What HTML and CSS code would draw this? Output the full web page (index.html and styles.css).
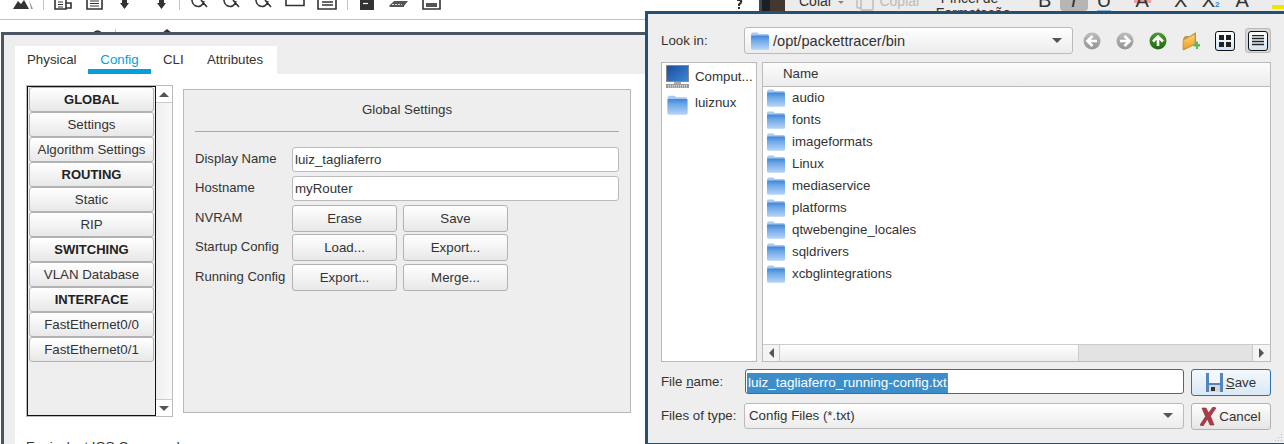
FILE: index.html
```html
<!DOCTYPE html>
<html lang="en">
<head>
  <meta charset="UTF-8">
  <title>Packet Tracer - Router Config</title>
  <link rel="stylesheet" href="styles.css">
</head>
<body>
  <svg class="defs" width="0" height="0">
    <defs>
      <linearGradient id="folder-body" x1="0" y1="0" x2="0" y2="1">
        <stop offset="0" stop-color="#3f86d6"/>
        <stop offset="0.35" stop-color="#6fa8e8"/>
        <stop offset="1" stop-color="#b5d3f7"/>
      </linearGradient>
      <linearGradient id="grey-ball" x1="0" y1="0" x2="0" y2="1">
        <stop offset="0" stop-color="#bdbdbd"/>
        <stop offset="1" stop-color="#949494"/>
      </linearGradient>
      <linearGradient id="green-ball" x1="0" y1="0" x2="0" y2="1">
        <stop offset="0" stop-color="#4b9a32"/>
        <stop offset="1" stop-color="#1f6a12"/>
      </linearGradient>
      <linearGradient id="new-folder" x1="0" y1="0" x2="0" y2="1">
        <stop offset="0" stop-color="#fbd676"/>
        <stop offset="1" stop-color="#ea9d1e"/>
      </linearGradient>
      <linearGradient id="screen" x1="0" y1="0" x2="1" y2="1">
        <stop offset="0" stop-color="#1a4f9c"/>
        <stop offset="1" stop-color="#3f86d6"/>
      </linearGradient>
      <symbol id="folder" viewBox="0 0 20 19">
        <path d="M1 3.5 Q1 1.5 3 1.5 H7 Q8 1.5 8.6 3 H17 Q19 3 19 5 V17 Q19 18.5 17.5 18.5 H2.5 Q1 18.5 1 17 Z" fill="#a9c9f2"/>
        <rect x="1" y="4.5" width="18" height="14" rx="1" fill="url(#folder-body)"/>
      </symbol>
    </defs>
  </svg>

  <div class="desktop">
    <!-- app toolbar behind the windows -->
    <svg class="app-toolbar" width="760" height="33" viewBox="0 0 760 33">
      <g fill="#333">
        <path d="M13 9 L18 1 L21 4 L24 0 L29 9 Z"/>
        <path d="M29 0 L33 9 H31 Z" fill="#999"/>
        <path d="M122 0 H127 V3 H129 L124.5 9 L120 3 H122 Z"/>
        <path d="M159 0 H164 V3 H166 L161.5 9 L157 3 H159 Z"/>
        <path d="M360 0 H374 V10 H360 Z"/>
        <path d="M389 6 L394 1 H408 L404 6 V7 H390 Z" fill="#555"/>
        <path d="M426 3 H437 V7 H426 Z" fill="#555"/>
        <path d="M737 0 H742 Q743 3 740 5 V6 H738 V4 Q740 3 740 1 H737 Z M738 7 H740 V9 H738 Z"/>
      </g>
      <path d="M363 3.5 H368" stroke="#fff" stroke-width="1.2"/>
      <path d="M392 4.5 H402" stroke="#ddd" stroke-dasharray="2 1"/>
      <g fill="none" stroke="#333" stroke-width="1.6">
        <path d="M55 0 V9 H66 V0 M66 3 H71 V8 H66"/>
        <path d="M58 2 H63 M58 4.5 H63 M58 7 H63" stroke-width="1"/>
        <path d="M87 0 V9 H102 V0"/>
        <path d="M90 1 H99 M90 3.5 H99 M90 6 H99" stroke-width="1"/>
        <path d="M194 -4 A6 6 0 1 0 204 1 M201 0 L207 7"/>
        <path d="M226 -4 A6 6 0 1 0 236 1 M233 0 L239 7"/>
        <path d="M258 -4 A6 6 0 1 0 268 1 M265 0 L271 7"/>
        <path d="M286 0 V5.5 H304 V0"/>
        <path d="M318 0 V9 H336 V0 M322 2 H333 M322 5 H333"/>
        <path d="M423 0 V9 H440 V0"/>
      </g>
      <path d="M43.5 0 V10 M179.5 0 V10 M347.5 0 V10" stroke="#c4c4c4"/>
      <path d="M0 19.5 H645" stroke="#c0c0c0"/>
      <path d="M93 33 A5 5 0 0 1 102 33 Z M162 33 L167 29 L172 33 Z" fill="#333"/>
      <path d="M115.5 29 V33" stroke="#c4c4c4"/>
    </svg>

    <!-- office ribbon peeking out above the dialog -->
    <div class="ribbon">
      <div class="rb-photo"></div>
      <span class="rb-text rb-colar">Colar</span>
      <svg class="rb-caret" width="6" height="4" viewBox="0 0 6 4"><path d="M0 0 H6 L3 3 Z" fill="#888"/></svg>
      <svg class="rb-copy" width="18" height="11" viewBox="0 0 18 11"><path d="M1 0 V7 Q1 8 2 8 H5 M5 0 V9 Q5 10 6 10 H16 Q17 10 17 9 V0" fill="none" stroke="#bbb" stroke-width="1.4"/></svg>
      <span class="rb-text rb-copiar">Copiar</span>
      <div class="rb-pincel">
        <span>Pincel de</span>
        <span class="rb-format">Formatação</span>
      </div>
      <span class="rb-glyph rb-b">B</span>
      <span class="rb-glyph rb-i">I</span>
      <span class="rb-glyph rb-u">U</span>
      <span class="rb-glyph rb-a">A</span>
      <span class="rb-glyph rb-x">X</span>
      <span class="rb-glyph rb-x2">X<small>2</small></span>
      <span class="rb-glyph rb-aa">A</span>
      <span class="rb-hl"></span>
    </div>

    <!-- router window -->
    <div class="window router">
      <div class="tabs">
        <span class="tab">Physical</span>
        <span class="tab active">Config</span>
        <span class="tab">CLI</span>
        <span class="tab">Attributes</span>
      </div>
      <div class="tab-body">
        <div class="config-row">
          <div class="side-list">
            <div class="side-items">
              <button class="side-btn head">GLOBAL</button>
              <button class="side-btn">Settings</button>
              <button class="side-btn">Algorithm Settings</button>
              <button class="side-btn head">ROUTING</button>
              <button class="side-btn">Static</button>
              <button class="side-btn">RIP</button>
              <button class="side-btn head">SWITCHING</button>
              <button class="side-btn">VLAN Database</button>
              <button class="side-btn head">INTERFACE</button>
              <button class="side-btn">FastEthernet0/0</button>
              <button class="side-btn">FastEthernet0/1</button>
            </div>
            <div class="vscroll">
              <div class="vscroll-btn top"><svg width="10" height="5" viewBox="0 0 10 5"><path d="M0 5 L5 0 L10 5 Z" fill="#555"/></svg></div>
              <div class="vscroll-btn bottom"><svg width="10" height="5" viewBox="0 0 10 5"><path d="M0 0 H10 L5 5 Z" fill="#555"/></svg></div>
            </div>
          </div>

          <div class="settings">
            <div class="settings-title">Global Settings</div>
            <div class="settings-form">
              <label>Display Name</label>
              <input class="field" type="text" value="luiz_tagliaferro">
              <label>Hostname</label>
              <input class="field" type="text" value="myRouter">
              <label class="btn-label">NVRAM</label>
              <div class="btn-pair"><button class="btn">Erase</button><button class="btn">Save</button></div>
              <label class="btn-label">Startup Config</label>
              <div class="btn-pair"><button class="btn">Load...</button><button class="btn">Export...</button></div>
              <label class="btn-label">Running Config</label>
              <div class="btn-pair"><button class="btn">Export...</button><button class="btn">Merge...</button></div>
            </div>
          </div>
        </div>
        <div class="ios-title">Equivalent IOS Commands</div>
      </div>
    </div>

    <!-- save file dialog -->
    <div class="window dialog">
      <div class="look-row">
        <span class="look-label">Look in:</span>
        <div class="combo look-combo">
          <svg class="folder-ico" width="20" height="19"><use href="#folder"/></svg>
          <span class="combo-text">/opt/packettracer/bin</span>
          <span class="combo-arrow"></span>
        </div>
        <div class="nav-icons">
          <svg width="18" height="18" viewBox="0 0 18 18"><circle cx="9" cy="9" r="8.5" fill="url(#grey-ball)"/><path d="M9.5 4 L4.5 9 L9.5 14 M5 9 H14" fill="none" stroke="#fff" stroke-width="2.6"/></svg>
          <svg width="18" height="18" viewBox="0 0 18 18"><circle cx="9" cy="9" r="8.5" fill="url(#grey-ball)"/><path d="M8.5 4 L13.5 9 L8.5 14 M13 9 H4" fill="none" stroke="#fff" stroke-width="2.6"/></svg>
          <svg width="18" height="18" viewBox="0 0 18 18"><circle cx="9" cy="9" r="8.5" fill="url(#green-ball)"/><path d="M4 9.5 L9 4.5 L14 9.5 M9 5 V14" fill="none" stroke="#fff" stroke-width="2.6"/></svg>
          <svg width="18" height="20" viewBox="0 0 18 20">
            <path d="M1 8 L3 5 H8 L14 1 V13 L2 19 Z" fill="#b99a5a"/>
            <path d="M1 19 V9 L13 3 V13 Z" fill="url(#new-folder)" stroke="#b9821e" stroke-width="0.6"/>
            <path d="M11.5 13 H14 V10.5 H16 V13 H18 V15.5 H16 V18 H14 V15.5 H11.5 Z" fill="#5cb85c"/>
          </svg>
        </div>
        <div class="view-btn first">
          <svg width="12" height="12" viewBox="0 0 12 12"><path d="M0 0 H5 V5 H0 Z M7 0 H12 V5 H7 Z M0 7 H5 V12 H0 Z M7 7 H12 V12 H7 Z" fill="#222"/></svg>
        </div>
        <div class="view-toggle">
          <div class="view-btn">
            <svg width="12" height="12" viewBox="0 0 12 12"><path d="M0 0.5 H12 M0 3.5 H12 M0 6.5 H12 M0 9.5 H12" stroke="#222" stroke-width="1.4"/></svg>
          </div>
        </div>
      </div>

      <div class="browser-row">
        <div class="places">
          <div class="place first">
            <svg width="25" height="24" viewBox="0 0 25 24">
              <rect x="1" y="0" width="23" height="17" fill="#8a8a8a"/>
              <rect x="2" y="1" width="21" height="15" fill="url(#screen)"/>
              <path d="M9 17 H16 V19 H9 Z" fill="#aaa"/>
              <path d="M1 19 H24 L24 23 H1 Z" fill="#9a9a9a"/>
              <path d="M3 20.5 H22 M3 22 H22" stroke="#ddd" stroke-dasharray="1 1"/>
            </svg>
            <span>Comput...</span>
          </div>
          <div class="place second">
            <svg width="25" height="21"><use href="#folder"/></svg>
            <span>luiznux</span>
          </div>
        </div>
        <div class="files">
          <div class="files-head">Name</div>
          <div class="file-rows">
            <div class="file"><svg width="20" height="19"><use href="#folder"/></svg>audio</div>
            <div class="file"><svg width="20" height="19"><use href="#folder"/></svg>fonts</div>
            <div class="file"><svg width="20" height="19"><use href="#folder"/></svg>imageformats</div>
            <div class="file"><svg width="20" height="19"><use href="#folder"/></svg>Linux</div>
            <div class="file"><svg width="20" height="19"><use href="#folder"/></svg>mediaservice</div>
            <div class="file"><svg width="20" height="19"><use href="#folder"/></svg>platforms</div>
            <div class="file"><svg width="20" height="19"><use href="#folder"/></svg>qtwebengine_locales</div>
            <div class="file"><svg width="20" height="19"><use href="#folder"/></svg>sqldrivers</div>
            <div class="file"><svg width="20" height="19"><use href="#folder"/></svg>xcbglintegrations</div>
          </div>
          <div class="hscroll">
            <div class="hscroll-btn"><svg width="5" height="10" viewBox="0 0 5 10"><path d="M5 0 V10 L0 5 Z" fill="#555"/></svg></div>
            <div class="hscroll-thumb"></div>
            <div class="hscroll-track"></div>
            <div class="hscroll-btn end"><svg width="5" height="10" viewBox="0 0 5 10"><path d="M0 0 V10 L5 5 Z" fill="#555"/></svg></div>
          </div>
        </div>
      </div>

      <div class="name-row">
        <span class="name-label">File <u>n</u>ame:</span>
        <div class="name-input"><span class="selected">luiz_tagliaferro_running-config.txt</span></div>
        <button class="dlg-btn default">
          <svg width="17" height="19" viewBox="0 0 17 19">
            <path d="M0 0 H17 V19 H0 Z" fill="#5585bd"/>
            <rect x="3" y="0" width="11" height="10" fill="#f2f6fb"/>
            <rect x="3" y="12" width="11" height="7" fill="#d6d6d6"/>
            <rect x="5" y="14" width="4" height="4" fill="#333"/>
          </svg>
          <span><u>S</u>ave</span>
        </button>
      </div>

      <div class="type-row">
        <span class="type-label">Files of type:</span>
        <div class="combo type-combo">
          <span class="combo-text">Config Files (*.txt)</span>
          <span class="combo-arrow"></span>
        </div>
        <button class="dlg-btn cancel">
          <svg width="16" height="19" viewBox="0 0 16 19">
            <path d="M2 1 L6 1 L8.5 6 L13 0 L16 1 L10.5 9 L14 18 L10 18 L7.5 12 L3 19 L0 18 L5.5 9.5 Z" fill="#b03a48" stroke="#7a2a33" stroke-width="0.6"/>
          </svg>
          <span>Cancel</span>
        </button>
      </div>

      <svg class="grip" width="8" height="8" viewBox="0 0 8 8"><path d="M6 0 H7 V1 H6 Z M3 3 H4 V4 H3 Z M6 3 H7 V4 H6 Z M0 6 H1 V7 H0 Z M3 6 H4 V7 H3 Z M6 6 H7 V7 H6 Z" fill="#bbb"/></svg>
    </div>
  </div>
</body>
</html>
```

FILE: styles.css
```css
* {
  box-sizing: border-box;
}

body {
  margin: 0;
  background: #fff;
  font-family: "Liberation Sans", Arial, sans-serif;
  font-size: 13.3px;
  color: #333;
}

button, input {
  font-family: inherit;
  font-size: 13.3px;
  color: #333;
}

.defs {
  position: absolute;
}

.desktop {
  position: relative;
  width: 1284px;
  height: 444px;
  overflow: hidden;
}

.app-toolbar {
  position: absolute;
  left: 0;
  top: 0;
}

/* ribbon of the other app */
.ribbon {
  position: absolute;
  left: 759px;
  top: 0;
  width: 525px;
  height: 11px;
  overflow: hidden;
  display: flex;
  align-items: flex-start;
  background: #ececec;
  font-size: 14px;
}

.ribbon > * {
  flex: none;
}

.rb-photo {
  width: 26px;
  height: 11px;
  background: linear-gradient(90deg, #3c4852 0 3px, #1c2026 3px 11px, #43372f 11px);
}

.rb-text {
  height: 11px;
  line-height: 2px;
}

.rb-colar {
  margin-left: 14px;
}

.rb-caret {
  margin: 1px 0 0 6px;
}

.rb-copy {
  margin-left: 12px;
}

.rb-copiar {
  margin-left: 5px;
  color: #bbb;
}

.rb-pincel {
  width: 97px;
  margin: -9px 0 0 20px;
  display: flex;
  flex-direction: column;
  align-items: flex-start;
  line-height: 15px;
}

.rb-format {
  margin-left: -5px;
}

.rb-glyph {
  height: 11px;
  font-size: 20px;
  line-height: 0;
  text-align: center;
}

.rb-b {
  width: 14px;
}

.rb-i {
  width: 28px;
  margin-left: 8px;
  font-style: italic;
  background: #b5b5b5;
  border-radius: 0 0 4px 4px;
}

.rb-u {
  width: 14px;
  margin-left: 9px;
  height: 11px;
  border-bottom: 1px solid #8fb4e0;
}

.rb-a {
  width: 17px;
  margin-left: 23px;
  background: linear-gradient(#eea0a0, #eea0a0) top left / 100% 3px no-repeat;
}

.rb-x {
  width: 14px;
  margin-left: 23px;
}

.rb-x2 {
  width: 20px;
  margin-left: 14px;
  text-align: left;
}

.rb-x2 small {
  font-size: 8px;
  line-height: 0;
  color: #2f7fd6;
  font-weight: bold;
}

.rb-aa {
  width: 17px;
  margin-left: 12px;
}

.rb-hl {
  width: 13px;
  height: 4px;
  margin: 5px 0 0 21px;
  background: #f2e600;
}

/* windows */
.window {
  position: absolute;
  background: #eee;
}

.router {
  left: 1px;
  top: 32px;
  width: 650px;
  height: 430px;
  padding: 11px 0 0 11px;
  border-top: 3px solid #4a5763;
  border-left: 3px solid #4a5763;
}

.tabs {
  display: flex;
  width: 262px;
  height: 28px;
  background: #fff;
}

.tab {
  width: 44px;
  padding: 6px 0 0 12px;
  line-height: 15px;
}

.tab:first-child {
  width: 73px;
}

.tab:last-child {
  width: 82px;
}

.tab.active {
  width: 63px;
  padding-left: 0;
  text-align: center;
  color: #049fd9;
  border-bottom: 5px solid #049fd9;
}

.tab-body {
  height: 390px;
  padding: 11px 0 0 11px;
  background: #fff;
}

.config-row {
  display: flex;
  align-items: flex-start;
  gap: 10px;
}

.side-list {
  display: flex;
  width: 147px;
  height: 332px;
  border: 1px solid #bbb;
}

.side-items {
  width: 129px;
  height: 330px;
  padding: 0 1px;
  display: flex;
  flex-direction: column;
  background: #eee;
  border: 1px solid #111;
}

.side-btn {
  flex: none;
  height: 25px;
  padding: 0;
  border: 1px solid #b2b2b2;
  border-radius: 3px;
  background: linear-gradient(#fff, #e8e8e8);
}

.side-btn.head {
  font-weight: bold;
  font-size: 13px;
  color: #222;
}

.vscroll {
  flex: 1;
  display: flex;
  flex-direction: column;
  justify-content: space-between;
  background: linear-gradient(90deg, #eee, #fafafa);
}

.vscroll-btn {
  height: 17px;
  display: flex;
  align-items: center;
  justify-content: center;
  background: #fff;
}

.vscroll-btn.top {
  border-bottom: 1px solid #ccc;
}

.vscroll-btn.bottom {
  border-top: 1px solid #ccc;
}

.settings {
  width: 448px;
  height: 324px;
  margin-top: 4px;
  padding: 0 11px;
  background: #eee;
  border: 1px solid #b8b8b8;
}

.settings-title {
  height: 42px;
  padding-top: 12px;
  line-height: 15px;
  text-align: center;
  border-bottom: 1px solid #a8a8a8;
}

.settings-form {
  margin-top: 15px;
  display: grid;
  grid-template-columns: 97px 327px;
  grid-template-rows: 29px 29px 29px 30px 26px;
  align-items: start;
}

.settings-form label {
  font-size: 13.1px;
  line-height: 24px;
}

.settings-form label.btn-label {
  line-height: 26px;
}

.field {
  width: 327px;
  height: 25px;
  padding: 0 2px 1px;
  background: #fff;
  border: 1px solid #bbb;
  border-radius: 3px;
}

.btn-pair {
  display: flex;
  gap: 6px;
}

.btn {
  width: 105px;
  height: 27px;
  padding: 0;
  border: 1px solid #b2b2b2;
  border-radius: 3px;
  background: linear-gradient(#fff, #e8e8e8);
}

.ios-title {
  margin-top: 22px;
  line-height: 15px;
}

/* save dialog */
.dialog {
  left: 645px;
  top: 11px;
  width: 639px;
  height: 433px;
  padding: 13px 0 0 13px;
  border-top: 3px solid #25506f;
  border-left: 3px solid #25506f;
  border-bottom: 1px solid #25506f;
}

.look-row {
  display: flex;
  align-items: center;
  height: 27px;
}

.look-label {
  width: 83px;
  flex: none;
}

.combo {
  display: flex;
  align-items: center;
  flex: none;
  background: linear-gradient(#fff, #ececec);
  border: 1px solid #bbb;
  border-radius: 3px;
}

.look-combo {
  width: 329px;
  height: 27px;
  padding-left: 5px;
  font-size: 14.6px;
}

.folder-ico {
  margin-right: 3px;
}

.combo-text {
  flex: 1;
}

.combo-arrow {
  width: 0;
  height: 0;
  margin-right: 10px;
  border-left: 5px solid transparent;
  border-right: 5px solid transparent;
  border-top: 5px solid #555;
}

.nav-icons {
  display: flex;
  align-items: center;
  gap: 15px;
  margin-left: 10px;
}

.view-btn {
  width: 20px;
  height: 20px;
  flex: none;
  display: flex;
  align-items: center;
  justify-content: center;
  background: linear-gradient(#fff, #cfe4f7);
  border: 1.5px solid #111;
  border-radius: 3px;
}

.view-btn.first {
  margin-left: 15px;
}

.view-toggle {
  width: 26px;
  height: 25px;
  margin-left: 10px;
  display: flex;
  align-items: center;
  justify-content: center;
  background: #d8d8d8;
  border: 1px solid #bbb;
  border-radius: 3px;
}

.browser-row {
  display: flex;
  gap: 5px;
  height: 300px;
  margin-top: 8px;
}

.places {
  width: 96px;
  padding: 1px 3px;
  background: #fff;
  border: 1px solid #bbb;
}

.place {
  display: flex;
  align-items: center;
  gap: 5px;
}

.place.first {
  height: 25px;
}

.place.first span {
  margin-bottom: 1px;
}

.place.second {
  height: 22px;
  margin-top: 4px;
}

.place.second span {
  margin-bottom: 4px;
}

.files {
  width: 509px;
  display: flex;
  flex-direction: column;
  background: #fff;
  border: 1px solid #bbb;
}

.files-head {
  height: 24px;
  padding-left: 20px;
  line-height: 21px;
  background: linear-gradient(#fcfcfc, #ececec);
  border-bottom: 1px solid #bbb;
}

.file-rows {
  flex: 1;
  margin-top: -1px;
}

.file {
  display: flex;
  align-items: center;
  gap: 6px;
  height: 22px;
  padding-left: 3px;
}

.hscroll {
  display: flex;
  height: 17px;
  border-top: 1px solid #ccc;
}

.hscroll-btn {
  width: 16px;
  display: flex;
  align-items: center;
  justify-content: center;
  background: #f4f4f4;
}

.hscroll-btn.end {
  width: 17px;
}

.hscroll-thumb {
  width: 300px;
  background: linear-gradient(#fff, #ececec);
  border-left: 1px solid #ccc;
  border-right: 1px solid #ccc;
}

.hscroll-track {
  flex: 1;
  background: #e3e3e3;
  border-right: 1px solid #ccc;
}

.name-row {
  display: flex;
  align-items: flex-start;
  margin-top: 7px;
  height: 27px;
}

.name-label {
  width: 84px;
  flex: none;
  line-height: 26px;
}

.name-input {
  width: 439px;
  height: 25px;
  padding: 3px 0 0 1px;
  background: #fff;
  border: 1px solid #2a72a8;
  border-radius: 3px;
}

.selected {
  display: inline-block;
  height: 20px;
  padding-left: 1px;
  font-size: 13.5px;
  line-height: 19px;
  color: #fff;
  background: #3c8ecb;
  border-right: 1px solid #c8703a;
}

.dlg-btn {
  width: 80px;
  height: 27px;
  margin-left: 7px;
  flex: none;
  display: flex;
  align-items: center;
  justify-content: center;
  gap: 3px;
  padding: 0;
  background: linear-gradient(#fdfdfd, #e6e6e6);
  border: 1px solid #b2b2b2;
  border-radius: 3px;
}

.dlg-btn.default {
  background: linear-gradient(#f4f9fd, #d9e8f4);
  border-color: #2a72a8;
}

.dlg-btn.cancel {
  padding-right: 1px;
}

.type-row {
  display: flex;
  align-items: flex-start;
  margin-top: 7px;
}

.type-label {
  width: 83px;
  flex: none;
  line-height: 25px;
}

.type-combo {
  width: 440px;
  height: 26px;
  padding: 0 0 1px 4px;
}

.grip {
  position: absolute;
  right: 1px;
  bottom: 1px;
}
```
